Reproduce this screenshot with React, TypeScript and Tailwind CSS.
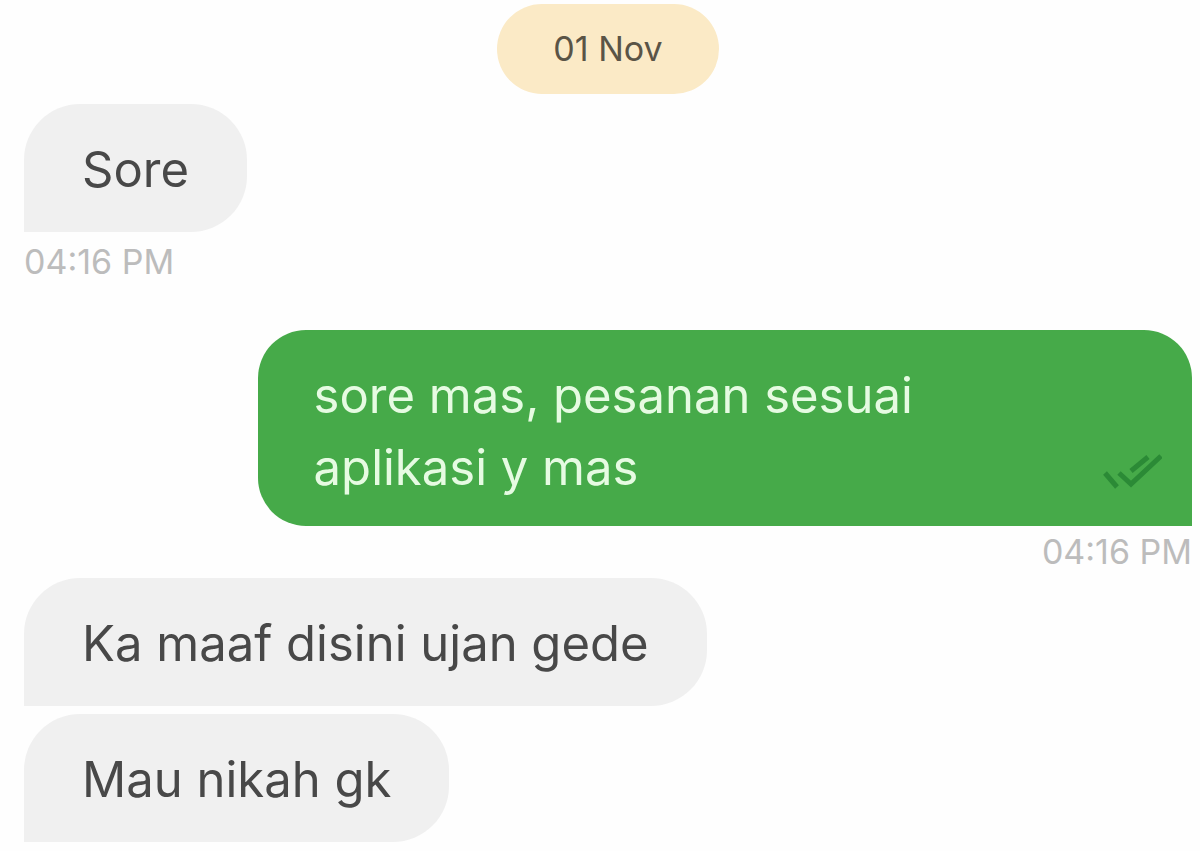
import React from "react";

type Message = {
  id: number;
  text: string;
  mine?: boolean;
  time?: string;
};

const firstMessages: Message[] = [
  { id: 1, text: "Sore", time: "04:16 PM" },
  {
    id: 2,
    text: "sore mas, pesanan sesuai aplikasi y mas",
    mine: true,
    time: "04:16 PM",
  },
];

const lastMessages: Message[] = [
  { id: 3, text: "Ka maaf disini ujan gede" },
  { id: 4, text: "Mau nikah gk" },
];

const ReadTicks = () => {
  return (
    <svg
      className="w-[60px] h-9 shrink-0"
      viewBox="0 0 60 36"
      fill="none"
      stroke="#2b8a36"
      strokeWidth="5"
      role="img"
      aria-label="Read"
    >
      <path d="M3 19L15 33" />
      <path d="M17 19L29 30L59 2" />
      <path d="M29 17L46 3" />
    </svg>
  );
};

const Time = ({ value }: { value: string }) => {
  return (
    <time className="text-[34px] leading-[52px] text-[#bcbcbc]">{value}</time>
  );
};

const Bubble = ({ message }: { message: Message }) => {
  if (message.mine) {
    return (
      <div className="flex flex-col items-end">
        <div className="max-w-[80%] flex items-end bg-[#46aa49] rounded-[48px] rounded-br-none pl-14 pr-[30px] pt-[30px] pb-[22px]">
          <p className="flex-1 pr-12 text-[#e6fbe2]">{message.text}</p>
          <div className="pb-3.5">
            <ReadTicks />
          </div>
        </div>
        {message.time && <Time value={message.time} />}
      </div>
    );
  }

  return (
    <div className="flex flex-col items-start gap-1">
      <div className="max-w-[80%] bg-[#f0f0f0] rounded-[56px] rounded-bl-none px-[58px] pt-[30px] pb-[26px]">
        <p className="text-[#484848]">{message.text}</p>
      </div>
      {message.time && <Time value={message.time} />}
    </div>
  );
};

const App = () => {
  return (
    <main className="min-h-screen bg-[#fefefe] pl-6 pr-2 pt-1 pb-2 font-['Inter',sans-serif] font-normal text-[49px] leading-[72px]">
      <div className="flex justify-center pb-2.5">
        <h2 className="bg-[#fbeac6] rounded-full px-14 py-5 text-[34px] leading-[50px] text-[#5a5446]">
          01 Nov
        </h2>
      </div>
      <section className="flex flex-col gap-[42px]">
        {firstMessages.map((message) => (
          <Bubble key={message.id} message={message} />
        ))}
      </section>
      <section className="flex flex-col gap-2">
        {lastMessages.map((message) => (
          <Bubble key={message.id} message={message} />
        ))}
      </section>
    </main>
  );
};

export default App;
